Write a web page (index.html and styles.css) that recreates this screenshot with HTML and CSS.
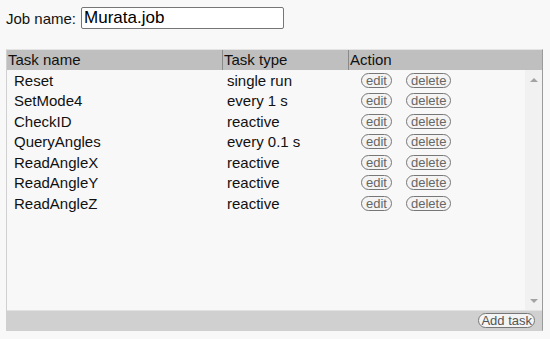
FILE: index.html
```html
<!DOCTYPE html>
<html lang="en">

<head>
    <meta charset="UTF-8">
    <meta name="viewport" content="width=device-width, initial-scale=1.0">
    <link rel="stylesheet" href="styles.css">
    <title>Job Editor</title>
</head>

<body>
    <div class="job-row">
        <label for="job-name">Job name:</label>
        <input type="text" id="job-name" value="Murata.job">
    </div>

    <div class="task-table">
        <div class="table-head">
            <div class="col-name">Task name</div>
            <div class="col-type">Task type</div>
            <div class="col-action">Action</div>
        </div>
        <div class="table-body">
            <div class="rows" id="task-rows"></div>
            <div class="scrollbar">
                <span class="arrow-up"></span>
                <span class="arrow-down"></span>
            </div>
        </div>
        <div class="table-foot">
            <button class="pill">Add task</button>
        </div>
    </div>

    <script>
        // Task list
        const tasks = [
            { name: 'Reset', type: 'single run' },
            { name: 'SetMode4', type: 'every 1 s' },
            { name: 'CheckID', type: 'reactive' },
            { name: 'QueryAngles', type: 'every 0.1 s' },
            { name: 'ReadAngleX', type: 'reactive' },
            { name: 'ReadAngleY', type: 'reactive' },
            { name: 'ReadAngleZ', type: 'reactive' }
        ];

        const rowsContainer = document.getElementById('task-rows');

        tasks.forEach(task => {
            const row = document.createElement('div');
            row.classList.add('task-row');
            row.innerHTML = `
                <div class="col-name">${task.name}</div>
                <div class="col-type">${task.type}</div>
                <div class="col-action">
                    <button class="pill">edit</button>
                    <button class="pill">delete</button>
                </div>
            `;
            rowsContainer.appendChild(row);
        });
    </script>
</body>

</html>
```

FILE: styles.css
```css
body {
    font-family: "Liberation Sans", Arial, sans-serif;
    font-size: 15px;
    color: #111;
    background-color: #f8f8f8;
    margin: 0;
    padding: 7px 6px;
}

.job-row {
    display: flex;
    align-items: center;
    gap: 5px;
}

.job-row input {
    width: 197px;
    height: 18px;
    padding: 1px 2px;
    font-family: inherit;
    font-size: 17px;
    color: #000;
    background: #fff;
    border: 1px solid #767676;
    border-radius: 2px;
    margin: 0;
}

.task-table {
    margin-top: 20px;
    width: 535px;
    border: 1px solid #d0d0d0;
    border-right-color: #9a9a9a;
    border-top-color: #e4e4e4;
}

.table-head {
    display: flex;
    height: 20px;
    line-height: 20px;
    background-color: #bfbfbf;
}

.table-head > div {
    padding-left: 1px;
}

.table-head .col-type,
.table-head .col-action {
    border-left: 1px solid #8a8a8a;
}

.table-head .col-name {
    width: 214px;
}

.table-head .col-type {
    width: 124px;
}

.col-action {
    flex: 1;
}

.table-body {
    display: flex;
    height: 240px;
}

.rows {
    flex: 1;
}

.task-row {
    display: flex;
    height: 20.5px;
    align-items: center;
}

.task-row .col-name {
    width: 210px;
    padding-left: 7px;
}

.task-row .col-type {
    width: 131px;
    padding-left: 3px;
}

.task-row .col-action {
    padding-left: 3px;
    display: flex;
    gap: 14px;
}

.pill {
    font-family: inherit;
    font-size: 13px;
    line-height: 13px;
    color: #666;
    background: #f4f4f4;
    border: 1px solid #777;
    border-radius: 8px;
    padding: 0 4px;
    margin: 0;
    cursor: pointer;
}

.scrollbar {
    width: 17px;
    background-color: #f1f1f1;
    display: flex;
    flex-direction: column;
    justify-content: space-between;
    align-items: center;
    padding: 8px 0 7px;
}

.arrow-up {
    border-left: 4px solid transparent;
    border-right: 4px solid transparent;
    border-bottom: 4px solid #a3a3a3;
}

.arrow-down {
    border-left: 4px solid transparent;
    border-right: 4px solid transparent;
    border-top: 4px solid #a3a3a3;
}

.table-foot {
    display: flex;
    justify-content: flex-end;
    align-items: center;
    height: 19px;
    padding-right: 7px;
    background-color: #d0d0d0;
    border-top: 1px solid #e2e2e2;
}

.table-foot .pill {
    padding: 0 2px;
    color: #555;
}
```
